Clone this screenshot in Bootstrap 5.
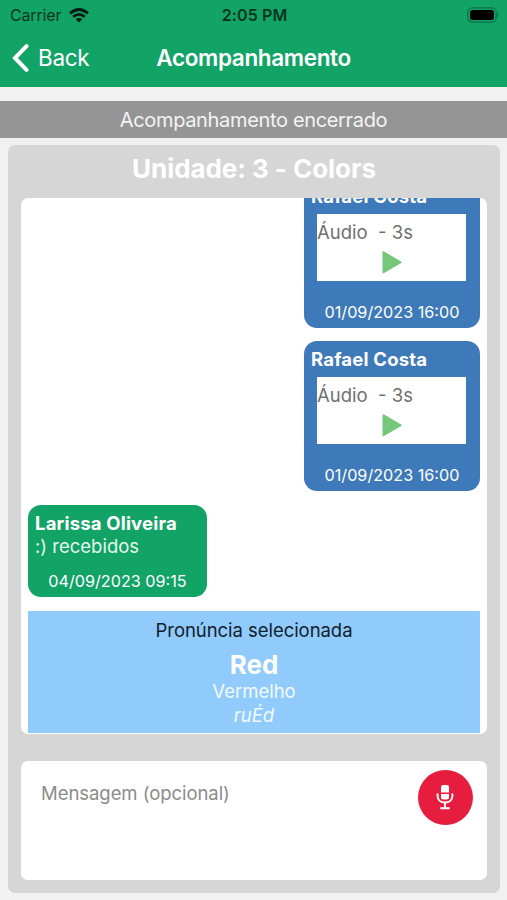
<!DOCTYPE html>
<html lang="pt-BR">
<head>
<meta charset="utf-8">
<meta name="viewport" content="width=device-width, initial-scale=1">
<title>Acompanhamento</title>
<link href="https://cdn.jsdelivr.net/npm/bootstrap@5.3.0/dist/css/bootstrap.min.css" rel="stylesheet">
<style>
  body { font-family: Inter, "Liberation Sans", sans-serif; background: #f1f1f1; height: 900px; overflow: hidden; }
  .app-header { background: #12a367; height: 87px; }
  .status-line { height: 30px; font-size: 16px; line-height: 30px; color: #06351f; padding: 0 8px 0 10px; }
  .carrier { letter-spacing: -.15px; }
  .side { flex: 1 1 0; }
  .clock { font-size: 16px; font-weight: 600; letter-spacing: .1px; }
  .title-line { height: 56px; line-height: 56px; padding: 0 12px; }
  .back-link { font-size: 22.5px; letter-spacing: -.3px; gap: 9px; }
  .screen-title { font-size: 22.5px; font-weight: 600; letter-spacing: -.35px; }
  .notice { margin-top: 13.5px; height: 37.5px; line-height: 39px; background: #959595; color: #f4f4f4; font-size: 20px; letter-spacing: -.34px; }
  .panel { margin: 7px 7px 0 8px; height: 748px; background: #d6d6d6; border-radius: 7px; padding: 0 13px 13px; }
  .panel-title { height: 52.5px; line-height: 47.5px; font-size: 26px; font-weight: 700; letter-spacing: -.06px; }
  .chat { height: 536px; background: #fff; border-radius: 7px; padding: 0 7px; }
  .bubble { border-radius: 13px; color: #fff; padding: 7px; }
  .bubble-out { background: #3e79ba; width: 176px; height: 150px; margin-bottom: 13.5px; }
  .bubble-out:first-child { margin-top: -20px; }
  .bubble-in { background: #12a367; width: 179px; height: 92px; margin-bottom: 14.5px; }
  .sender { font-size: 18.5px; line-height: 23px; font-weight: 700; letter-spacing: .19px; }
  .message { font-size: 18.5px; line-height: 23px; color: #e4f8ec; }
  .stamp { font-size: 16.2px; line-height: 18px; }
  .bubble-in .stamp { line-height: 17px; }
  .audio { background: #fff; color: #707070; margin: 6px 7px 0 6px; height: 67px; font-size: 18.5px; line-height: 24px; padding-top: 6px; white-space: pre; }
  .pron { background: #90cbfb; height: 122px; color: #f3faff; font-size: 18.5px; line-height: 24px; padding-top: 6.500px; }
  .pron-label { color: #10202c; letter-spacing: -.05px; }
  .pron-word { font-size: 26px; line-height: 31px; font-weight: 700; color: #fff; margin-top: 7px; }
  .pron-translation { line-height: 23px; }
  .composer { margin-top: 27px; height: 119px; background: #fff; border-radius: 7px; padding: 9px 14px 0 20px; }
  .hint { color: #8b8b8b; font-size: 18.5px; line-height: 24px; margin-top: 11px; letter-spacing: -.05px; }
  .mic { width: 55px; height: 55px; background: #e71d3f; padding: 0 2px 1px 0; }
</style>
</head>
<body>
<header class="app-header">
  <div class="status-line d-flex align-items-center">
    <div class="side d-flex align-items-center"><span class="carrier">Carrier</span>
      <svg class="ms-2" width="20" height="15" viewBox="0 0 20 15" fill="none" stroke="#031b10" stroke-width="2.8"><path d="M1 5.4Q10-2.4 19 5.4M4.2 8.9Q10 3.8 15.8 8.9"/><path d="M10 14.5 6.8 11.3Q10 8.6 13.2 11.3Z" fill="#031b10" stroke="none"/></svg>
    </div>
    <span class="clock">2:05 PM</span>
    <div class="side d-flex justify-content-end">
      <svg width="33" height="16" viewBox="0 0 33 16"><rect x="1.800" y=".8" width="28.4" height="14.4" rx="4.5" fill="none" stroke="#0b7149" stroke-width="1.3"/><rect x="4" y="3" width="24" height="10" rx="2.5" fill="#000"/><path d="M31.500 5.500q2 2.500 0 5z" fill="#0b7149"/></svg>
    </div>
  </div>
  <div class="title-line d-flex align-items-center text-white">
    <div class="side back-link d-flex align-items-center">
      <svg width="17" height="28" viewBox="0 0 17 28" fill="none" stroke="#fff" stroke-width="4" stroke-linecap="round" stroke-linejoin="miter"><path d="M14.5 2.2 3 14 14.5 25.8"/></svg><span>Back</span>
    </div>
    <span class="screen-title">Acompanhamento</span>
    <div class="side"></div>
  </div>
</header>
<div class="notice text-center">Acompanhamento encerrado</div>
<main class="panel">
  <div class="panel-title text-white text-center">Unidade: 3 - Colors</div>
  <section class="chat overflow-hidden d-flex flex-column">
    <article class="bubble bubble-out flex-shrink-0 align-self-end d-flex flex-column">
      <div class="sender">Rafael Costa</div>
      <div class="audio"><div>Áudio  - 3s</div><svg class="d-block mx-auto mt-1" width="22" height="28" viewBox="0 0 22 28"><path d="M2.300 4 19.800 14.200 2.300 24.500Z" fill="#75c77b" stroke="#75c77b" stroke-width="1.6" stroke-linejoin="round"/></svg></div>
      <div class="stamp text-center mt-auto">01/09/2023 16:00</div>
    </article>
    <article class="bubble bubble-out flex-shrink-0 align-self-end d-flex flex-column">
      <div class="sender">Rafael Costa</div>
      <div class="audio"><div>Áudio  - 3s</div><svg class="d-block mx-auto mt-1" width="22" height="28" viewBox="0 0 22 28"><path d="M2.300 4 19.800 14.200 2.300 24.500Z" fill="#75c77b" stroke="#75c77b" stroke-width="1.6" stroke-linejoin="round"/></svg></div>
      <div class="stamp text-center mt-auto">01/09/2023 16:00</div>
    </article>
    <article class="bubble bubble-in flex-shrink-0 d-flex flex-column">
      <div class="sender">Larissa Oliveira</div>
      <div class="message">:) recebidos</div>
      <div class="stamp text-center mt-auto">04/09/2023 09:15</div>
    </article>
    <div class="pron flex-shrink-0 text-center">
      <div class="pron-label">Pronúncia selecionada</div>
      <div class="pron-word">Red</div>
      <div class="pron-translation">Vermelho</div>
      <div class="fst-italic">ruÉd</div>
    </div>
  </section>
  <section class="composer d-flex justify-content-between align-items-start">
    <div class="hint">Mensagem (opcional)</div>
    <div class="mic rounded-circle d-flex align-items-center justify-content-center">
      <svg width="18" height="26" viewBox="0 0 18 26" fill="none" stroke="#fff"><path d="M5 8.6V3.2Q5 1 7 1h4q2 0 2 2.2v5.4zM5 10h8v3q0 2.5-2.5 2.5h-3Q5 15.500 5 13z" fill="#fff" stroke="none"/><path d="M1.600 9.500v2.500c0 4 3.200 6.500 7.400 6.500s7.400-2.500 7.400-6.500V9.500M9 18.500v5M4.300 24.300h9.400" stroke-width="1.9"/></svg>
    </div>
  </section>
</main>
<script src="https://cdn.jsdelivr.net/npm/bootstrap@5.3.0/dist/js/bootstrap.bundle.min.js"></script>
</body>
</html>
